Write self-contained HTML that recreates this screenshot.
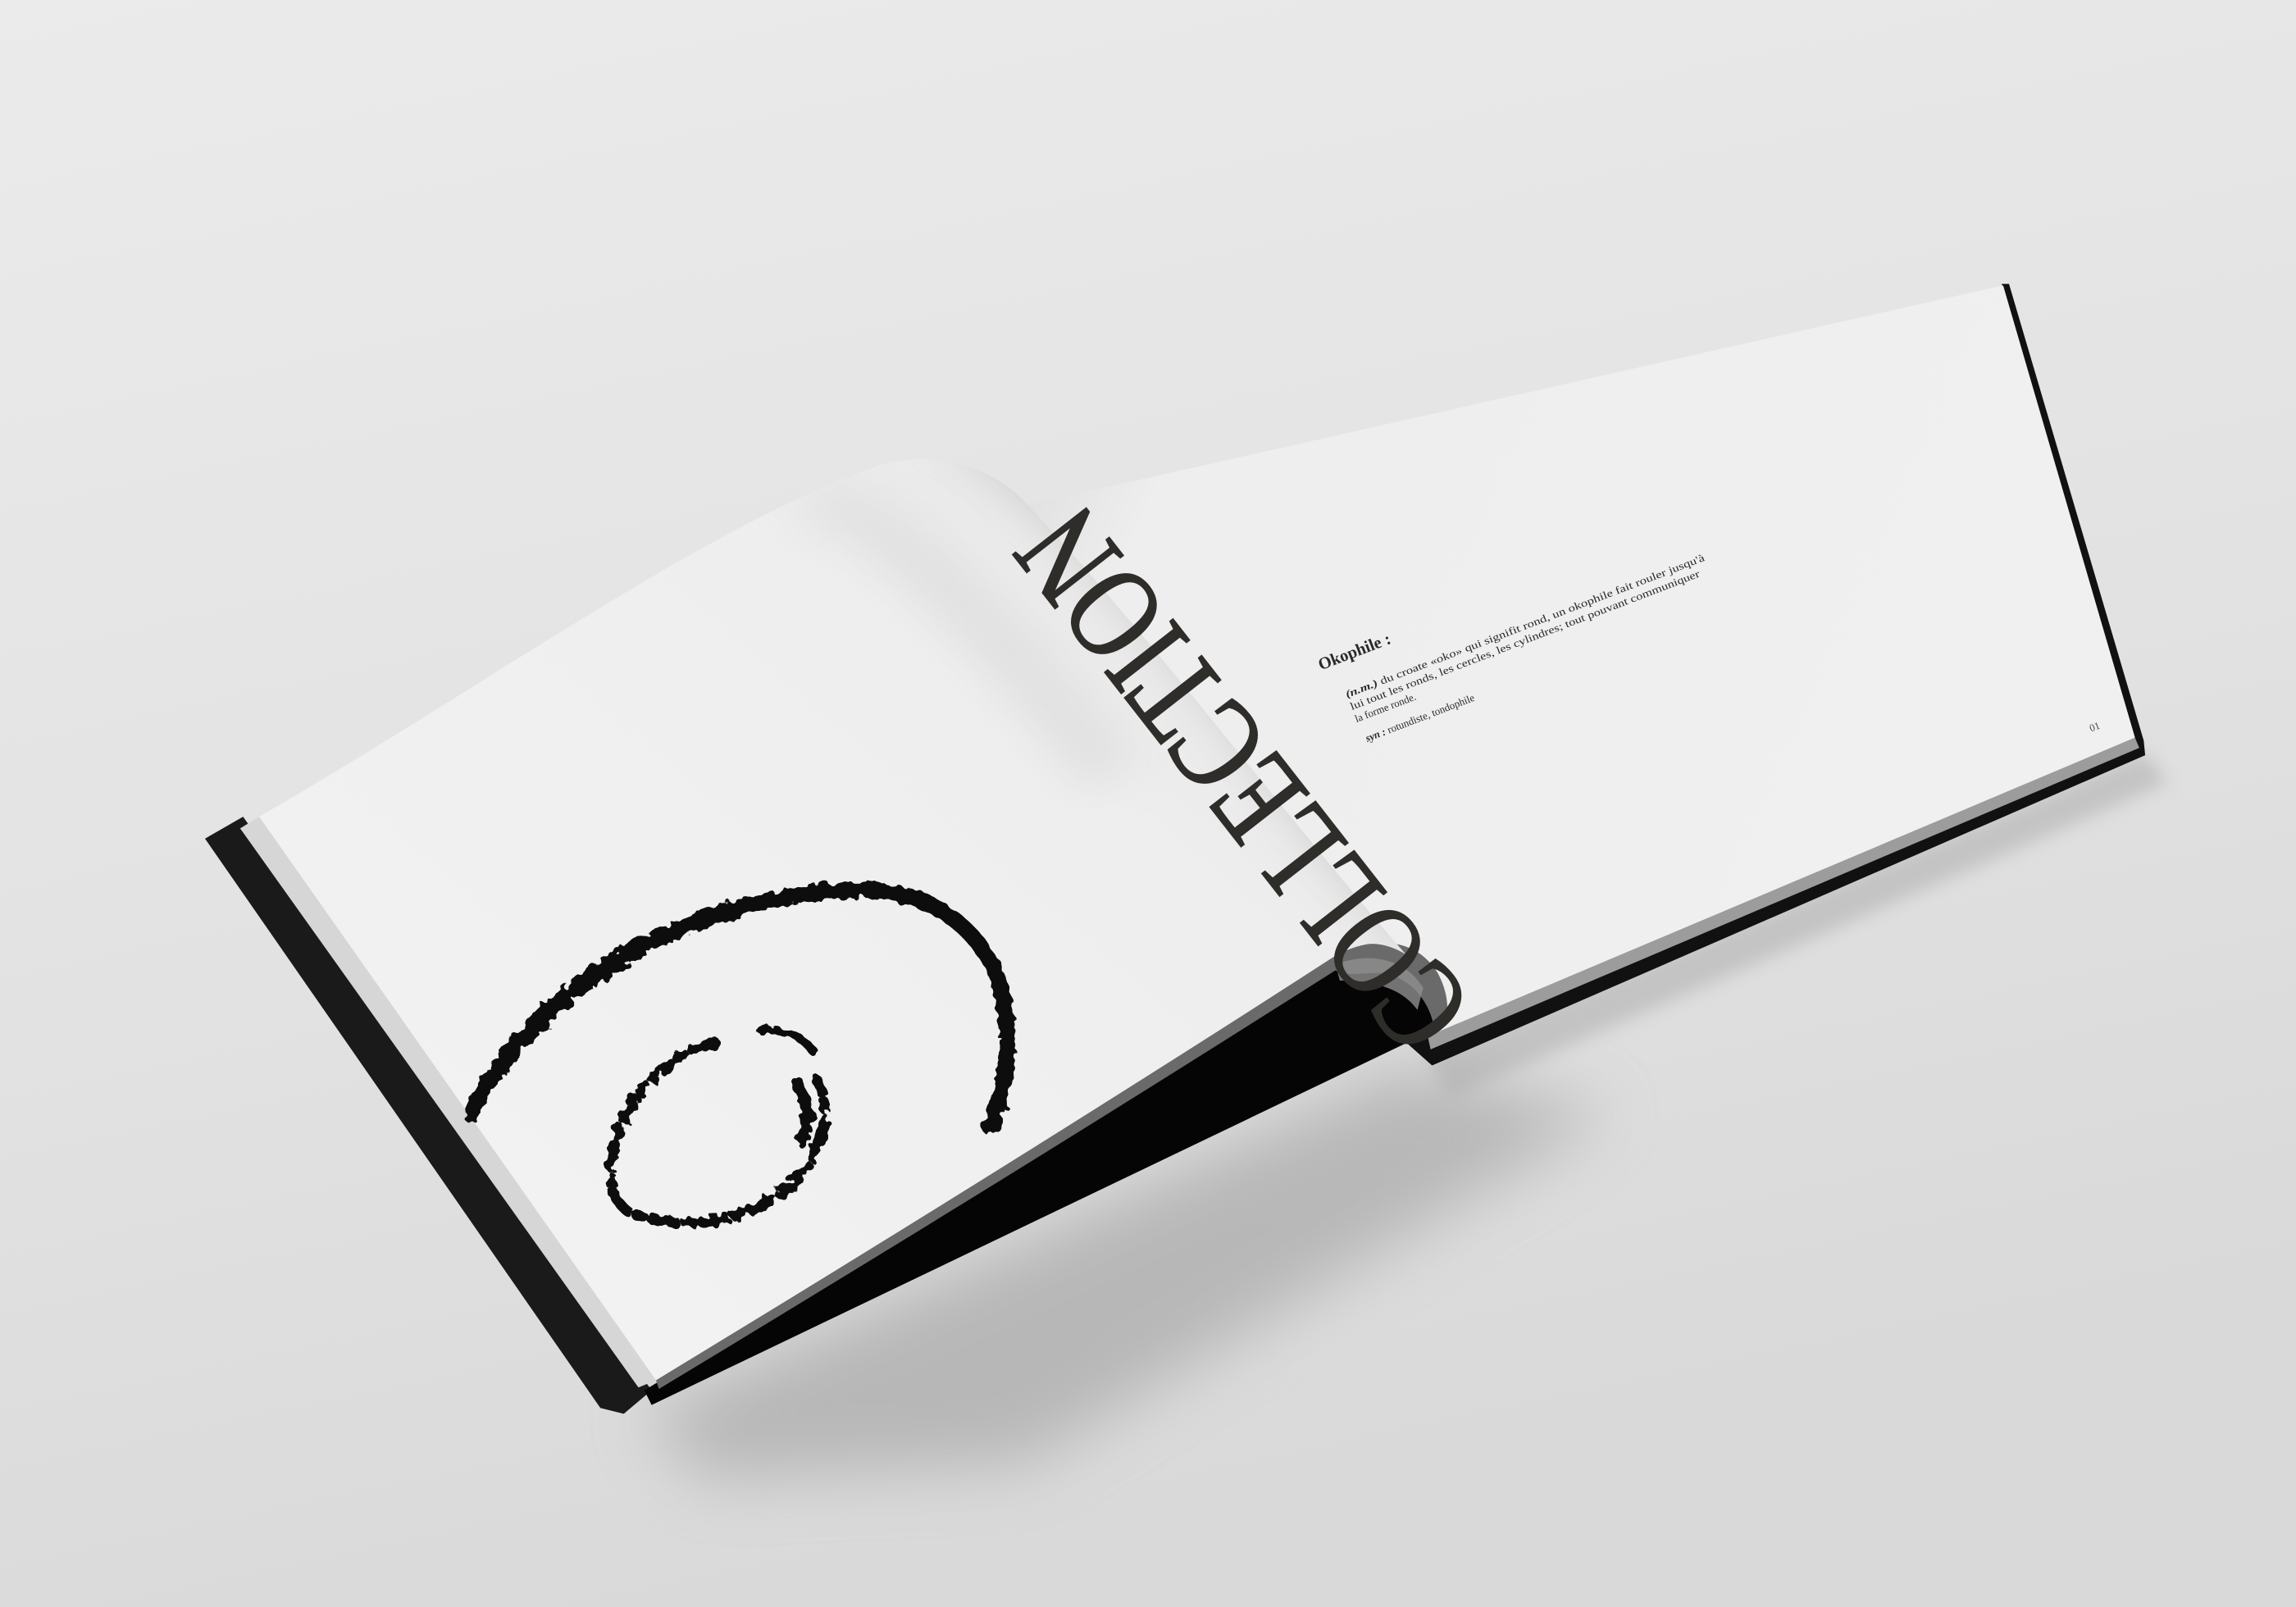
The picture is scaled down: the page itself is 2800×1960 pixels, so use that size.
<!DOCTYPE html>
<html><head><meta charset="utf-8"><style>
html,body{margin:0;padding:0;width:2800px;height:1960px;overflow:hidden;background:#e4e4e4}
svg{display:block}
</style></head><body>
<svg width="2800" height="1960" viewBox="0 0 1568 1098" preserveAspectRatio="none" xmlns="http://www.w3.org/2000/svg">
<defs>
<linearGradient id="bg" x1="0" y1="0" x2="0.3" y2="1">
<stop offset="0" stop-color="#ebebeb"/><stop offset="0.6" stop-color="#e2e2e2"/><stop offset="1" stop-color="#d9d9d9"/>
</linearGradient>
<linearGradient id="lp" x1="0.15" y1="0.8" x2="0.9" y2="0.1">
<stop offset="0" stop-color="#f2f2f2"/><stop offset="0.7" stop-color="#eeeeee"/><stop offset="1" stop-color="#e6e6e6"/>
</linearGradient>
<linearGradient id="rp" x1="0" y1="0.3" x2="1" y2="0.6">
<stop offset="0" stop-color="#e2e2e2"/><stop offset="0.1" stop-color="#eeeeee"/><stop offset="1" stop-color="#f0f0f0"/>
</linearGradient>
<filter id="blur" x="-20%" y="-20%" width="140%" height="140%"><feGaussianBlur stdDeviation="22"/></filter>
<filter id="blur2" x="-20%" y="-20%" width="140%" height="140%"><feGaussianBlur stdDeviation="6"/></filter>
<filter id="blur3" x="-50%" y="-50%" width="200%" height="200%"><feGaussianBlur stdDeviation="14"/></filter>
<filter id="rough"><feTurbulence type="fractalNoise" baseFrequency="0.15" numOctaves="2" seed="3"/><feDisplacementMap in="SourceGraphic" scale="8"/></filter>
<clipPath id="lclip"><path d="M177,558 C330,470 480,360 600,318 C640,306 680,320 702,345 C790,440 880,560 960,652 C940,640 925,645 912,653 Q700,790 448,943 Z"/></clipPath>
</defs>
<rect width="1568" height="1098" fill="url(#bg)"/>

<!-- shadows -->
<path d="M440,965 L960,728 L1100,760 L700,1000 L480,1010 Z" fill="#9a9a9a" opacity="0.55" filter="url(#blur)"/>
<path d="M975,722 L1465,514 L1480,535 L990,750 Z" fill="#a8a8a8" opacity="0.5" filter="url(#blur2)"/>

<!-- right cover & page block -->
<path d="M1367,194 L1372,194 L1464,506 L1465,516 L978,728 L960,712 L962,700 L975,708 L1458,504 Z" fill="#111"/>
<path d="M975,708 L1458,504 L1461,511 L977,717 Z" fill="#9c9c9c"/>
<!-- right page -->
<path d="M702,345 L1368,195 L1458,504 L975,708 L960,690 Z" fill="url(#rp)"/>

<!-- left cover -->
<path d="M140,573 L166,558 L445,950 L426,966 L410,962 Z" fill="#1a1a1a"/>
<path d="M164,566 L177,558 L448,943 L436,948 Z" fill="#d6d6d6"/>
<!-- underside black -->
<path d="M440,950 Q700,792 912,653 C945,640 975,655 985,690 L985,702 L966,710 L445,960 Z" fill="#050505"/>
<!-- page fan edges -->
<path d="M448,943 Q700,790 912,653 C940,638 968,642 982,665 C990,680 990,695 985,702 L979,700 C976,685 964,668 945,665 C930,664 920,668 912,663 Q700,798 450,949 Z" fill="#6a6a6a"/>
<path d="M912,659 C935,650 960,655 972,675 L968,690 C958,676 940,670 915,670 Z" fill="#8e8e8e" opacity="0.8"/>
<!-- left page -->
<path d="M177,558 C330,470 480,360 600,318 C640,306 680,320 702,345 C790,440 880,560 960,652 C940,640 925,645 912,653 Q700,790 448,943 Z" fill="url(#lp)"/>
<g clip-path="url(#lclip)">
<path d="M640,300 C700,330 790,430 900,580 L960,650 L1000,620 L740,300 Z" fill="#c8c8c8" opacity="0.8" filter="url(#blur3)"/>
<path d="M560,330 C620,330 700,420 780,520 L740,540 C660,440 600,370 540,350 Z" fill="#dadada" opacity="0.6" filter="url(#blur3)"/>
</g>

<!-- ink circles -->
<g fill="none" stroke="#111" stroke-linecap="round" filter="url(#rough)">
<path d="M322,762 C340,720 380,680 420,656 C470,628 520,612 580,608 C630,606 665,630 680,665 C692,695 690,740 676,770" stroke-width="11"/>
<path d="M330,752 C360,705 400,670 450,645" stroke-width="5" stroke-dasharray="10 6"/>
<path d="M488,712 C460,718 430,745 420,780 C412,810 420,828 440,832 C470,840 510,835 540,810 C560,790 570,760 558,738" stroke-width="7" stroke-dasharray="16 7 5 6"/>
<path d="M520,704 C535,702 548,708 555,718" stroke-width="6"/>
<path d="M545,740 L552,760 L548,780" stroke-width="8"/>
</g>

<!-- COLLECTION -->
<text transform="translate(1008,688) rotate(-128)" font-family="Liberation Serif, serif" font-size="90" fill="#2e2d2a" stroke="#2e2d2a" stroke-width="1.2" textLength="440" lengthAdjust="spacingAndGlyphs" y="0">COLLECTION</text>

<!-- definition text -->
<g transform="translate(902,458) rotate(-21)" font-family="Liberation Serif, serif" fill="#2a2a2a">
<text x="0" y="0" font-size="11.5" font-weight="bold">Okophile :</text>
<text x="10" y="24" font-size="7.2" textLength="262" lengthAdjust="spacingAndGlyphs"><tspan font-style="italic" font-weight="bold">(n.m.)</tspan> du croate «oko» qui signifit rond, un okophile fait rouler jusqu'à</text>
<text x="10" y="33" font-size="7.2" textLength="255" lengthAdjust="spacingAndGlyphs">lui tout les ronds, les cercles, les cylindres; tout pouvant communiquer</text>
<text x="10" y="42" font-size="7.2">la forme ronde.</text>
<text x="12" y="57" font-size="7.2"><tspan font-style="italic" font-weight="bold">syn :</tspan> rotundiste, tondophile</text>
</g>
<text transform="translate(1428,500) rotate(-20)" font-family="Liberation Serif, serif" font-size="7" fill="#444">01</text>
</svg>
</body></html>
